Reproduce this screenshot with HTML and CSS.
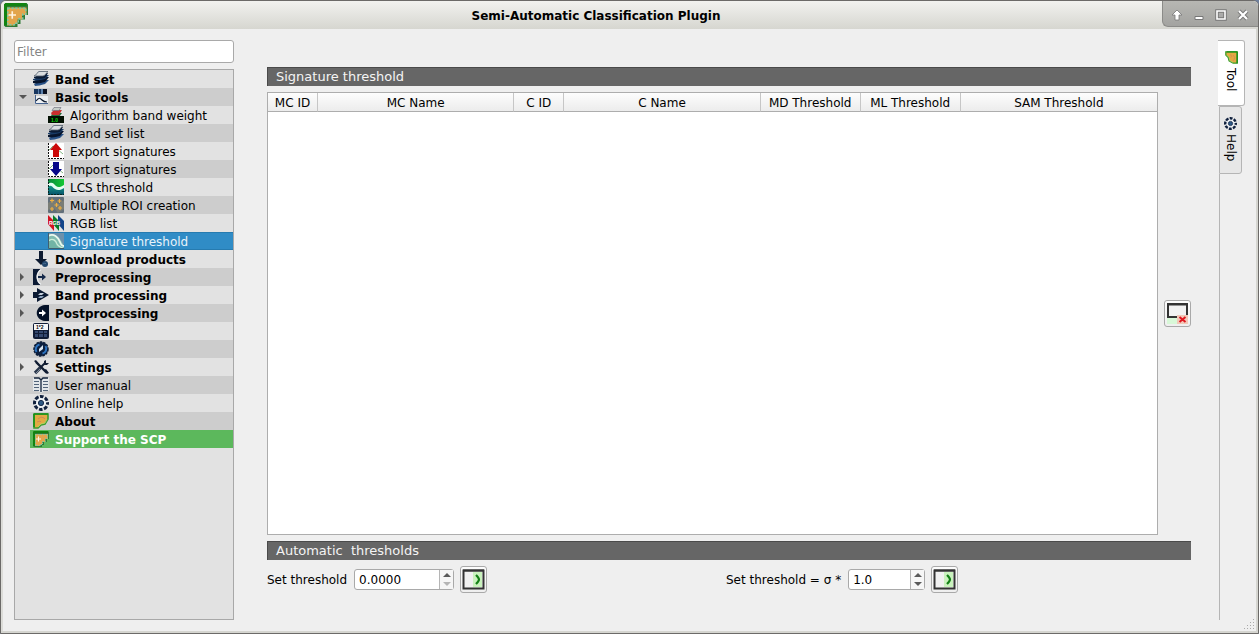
FILE: index.html
```html
<!DOCTYPE html>
<html lang="en">
<head>
<meta charset="utf-8">
<title>Semi-Automatic Classification Plugin</title>
<link rel="stylesheet" href="styles.css">
</head>
<body>
<svg class="defs" aria-hidden="true">
  <defs>
    <linearGradient id="g-lcs" x1="0" y1="0" x2="1" y2="0"><stop offset="0" stop-color="#0a8a3c"/><stop offset="1" stop-color="#12c832"/></linearGradient>
    <linearGradient id="g-sea" x1="0" y1="0" x2="0" y2="1"><stop offset="0" stop-color="#17a58c"/><stop offset="1" stop-color="#07506a"/></linearGradient>
  </defs>
  <symbol id="i-scp" viewBox="0 0 16 16">
    <path d="M1 0h14l1 1v7h-2v3h-3v3H9v2H1l-1-1V1z" fill="#2f7a35"/>
    <path d="M1 0h14v2H2v13H0V1z" fill="#128312"/>
    <path d="M2 3h13v5h-3v3H9v3H7v1H2z" fill="#e2a54c"/>
    <path d="M2.500 3.500h12v4h-2v3h-3v3h-2v1h-5z" fill="none" stroke="#7cc9a4" stroke-dasharray="1.500 1"/>
    <path d="M5.500 5.500v5M3 8h5" stroke="#fff3df" stroke-width="1.100"/>
  </symbol>
  <symbol id="i-about" viewBox="0 0 16 16">
    <path d="M1 1h14v5l-3 5-4 1-3 3H1z" fill="#e3aa42" stroke="#3c9d2c" stroke-width="1.600"/>
    <path d="M1 1h14M1 1v13" stroke="#189018" stroke-width="1.600"/>
    <path d="M5 6l3-2 3 1 1 1M4 9l3-1 1 1" stroke="#c9805c" fill="none" stroke-width=".8"/>
    <path d="M5 14l3-3 4-1 2-4" stroke="#b6d86c" fill="none" stroke-width=".8"/>
  </symbol>
  <symbol id="i-bands" viewBox="0 0 16 16">
    <path d="M1 13c3-1 4-3 6-4h9l-4 4c-4 1-7 2-10 2z" fill="#2a5388"/>
    <path d="M0 10c3 0 4-3 6-4h10l-4 5c-4 1-8 2-12 1z" fill="#07152d"/>
    <path d="M0 8c3 0 4-3 6-4h10l-4 4c-4 1-8 2-12 1z" fill="#183b66"/>
    <path d="M1 6c3 0 3-3 5-4h9l-3 5c-4 1-8 1-11 0z" fill="#0b1c36"/>
    <path d="M1 5c3-1 3-4 5-4.500h9c-2 1-2 4-5 4.500z" fill="#d9dde0" stroke="#53606f" stroke-width=".8"/>
  </symbol>
  <symbol id="i-basic" viewBox="0 0 16 16">
    <path fill="#17365f" d="M1 0h5v5H1zM6 0h2v5H6z"/><path fill="#0a1222" d="M10 0h4v5h-4z"/><path fill="#5b81ad" d="M5 0h1v5H5zM8 0h2v5H8z"/>
    <path d="M2 7h13v8H2z" fill="#edf0f3"/>
    <path d="M2.500 6v8.500H15" fill="none" stroke="#456390"/><path d="M3 12c3-4 4-3 6-1s3 2 5 2" fill="none" stroke="#101d32" stroke-width="1.200"/>
  </symbol>
  <symbol id="i-export" viewBox="0 0 16 16">
    <path d="M0 0h16v16H0z" fill="#fff"/><path d="M1 7l4-4 4 3 6 5" fill="none" stroke="#84b884"/>
    <path d="M.500 0v15.500H16" fill="none" stroke="#111" stroke-dasharray="2 1"/>
    <path d="M8 0l6 7h-3v7H5V7H2z" fill="#cc0909"/>
  </symbol>
  <symbol id="i-import" viewBox="0 0 16 16">
    <path d="M0 0h16v16H0z" fill="#fff"/><path d="M1 8l4-4 4 3 6 5" fill="none" stroke="#84b884"/>
    <path d="M.500 0v15.500H16" fill="none" stroke="#111" stroke-dasharray="2 1"/>
    <path d="M8 15l6-7h-3V1H5v7H2z" fill="#07078a"/>
  </symbol>
  <symbol id="i-lcs" viewBox="0 0 16 16">
    <path d="M0 0h16v16H0z" fill="url(#g-lcs)"/>
    <path d="M0 6c4-3 5 2 8 3s5 0 8-1v8H0z" fill="url(#g-sea)"/>
    <path d="M0 5c4-3 6 0 8 2s5 1 8-1v3c-3 2-6 3-9 1S3 5 0 8z" fill="#e4fff0"/>
    <path d="M0 15.500h16M.500 0v15" stroke="#06251f" stroke-dasharray="2 1"/>
  </symbol>
  <symbol id="i-roi" viewBox="0 0 16 16">
    <rect width="16" height="16" rx="1" fill="#626f7a"/><path d="M0 6l6-4 5 5 5-4v9l-6 4-4-5-6 2z" fill="#7a7d75"/>
    <path d="M4 1.500v4M2 3.500h4M11.500 2v4M9.500 4h4M8.500 6v4M6.500 8h4M4 10v4M2 12h4M12 9v4M10 11h4" stroke="#f0b040" stroke-width="1.200"/>
  </symbol>
  <symbol id="i-sig" viewBox="0 0 16 16">
    <path d="M0 0h16v16H0z" fill="#6c90ab"/><path d="M0 2c8-3 12 3 16 11v3H0z" fill="#82bdb0"/>
    <path d="M0 3c6-3 10 1 12 6 1 3 2 4 4 4" fill="none" stroke="#eaf8ef" stroke-width="1.800"/>
    <path d="M0 9c4-4 7-1 8 3 1 2 4 2 8 3v1H0z" fill="#71b4a5"/><path d="M0 8c5-4 8 0 9 3 1 2 3 3 6 4" fill="none" stroke="#cdeed9" stroke-width="1.200"/>
    <path d="M.500 0v15.500H16" fill="none" stroke="#405e70"/>
  </symbol>
  <symbol id="i-download" viewBox="0 0 16 16">
    <path d="M6 0h4v8h4l-6 6-6-6h4z" fill="#0d1b31"/><circle cx="12" cy="13" r="3" fill="#21466c"/><path d="M10 13l2-1 1 1" stroke="#5b7ca0" fill="none" stroke-width=".7"/>
  </symbol>
  <symbol id="i-pre" viewBox="0 0 16 16">
    <path d="M0 0h8C2 4 2 12 8 16H0z" fill="#0b1a34"/><path d="M8 .500C3 4 3 12 8 15.500" fill="none" stroke="#eef0f2" stroke-width="1.300"/>
    <path d="M5 8h5" stroke="#15294a" stroke-width="2"/><path d="M9 4.500l4 3.500-4 3.500z" fill="#15294a"/>
  </symbol>
  <symbol id="i-proc" viewBox="0 0 16 16">
    <path d="M0 5h4V1l12 7-12 7v-4H0z" fill="#0b1a33"/><path d="M5 8l2-2h4l-2 2z" fill="#c5cfdb"/><path d="M5 11l2-2h4l-2 2z" fill="#8fa5bf"/>
  </symbol>
  <symbol id="i-post" viewBox="0 0 16 16">
    <path d="M16 0h-4C1 1 1 15 12 16h4z" fill="#041127"/><path d="M6 8h4" stroke="#fff" stroke-width="2"/><path d="M9 4.500l4 3.500-4 3.500z" fill="#fff"/>
  </symbol>
  <symbol id="i-batch" viewBox="0 0 16 16">
    <circle cx="8" cy="8" r="7" fill="#0b1f3f"/><circle cx="8" cy="8" r="7" fill="none" stroke="#0b1c38" stroke-width="1.500" stroke-dasharray="2.500 1"/>
    <path d="M3.500 11a5 5 0 0 1 3-7.500M12.500 5a5 5 0 0 1-3 7.500" fill="none" stroke="#2d74c0" stroke-width="2"/>
    <path d="M6 11V8l4-4v4z" fill="#d9e6f2"/>
  </symbol>
  <symbol id="i-settings" viewBox="0 0 16 16">
    <path d="M3 3l11 11" stroke="#111d33" stroke-width="2.400"/><path d="M6 10l6-6" stroke="#111d33" stroke-width="2"/>
    <path d="M1 2l2-1 3 4-1 1zM11 5V2l2-1v3h3l-2 2h-3zM11 11l2-1 3 4-2 1z" fill="#111d33"/><path d="M2 14l5-5" stroke="#2a374c" stroke-width="3.400"/><path d="M3 14l4-4" stroke="#a6b0bc" stroke-width=".7"/>
  </symbol>
  <symbol id="i-manual" viewBox="0 0 16 16">
    <path d="M0 1h5l3 2 3-2h5v13h-5l-3 2-3-2H0z" fill="#e3e7ea"/>
    <path d="M8 3v12M8 3L6 1H1M8 3l2-2h5" stroke="#14243c" stroke-width="1.300" fill="none"/>
    <path d="M1 4.500h5M1 7.500h5M1 10.500h5M1 13.500h5M10 4.500h5M10 7.500h5M10 10.500h5M10 13.500h5" stroke="#52647a"/>
  </symbol>
  <symbol id="i-help" viewBox="0 0 16 16">
    <circle cx="8" cy="8" r="6.500" fill="#eef1f4" stroke="#10203d" stroke-width="3" stroke-dasharray="3.600 1.500" stroke-dashoffset="1.800"/>
    <circle cx="8" cy="8" r="2.600" fill="#2d5884" stroke="#152949"/>
  </symbol>
  <symbol id="i-run" viewBox="0 0 23 21">
    <path d="M1.500 1.500h20v18h-20z" fill="#f1f1f1" stroke="#333" stroke-width="2"/><path d="M1 1.500h21" stroke="#333" stroke-width="2"/>
    <path d="M11 3h9v15h-9z" fill="#c9f2bd"/><path d="M14 6c4 4 4 5 0 9" fill="none" stroke="#138016" stroke-width="2.200"/>
  </symbol>
  <symbol id="i-reset" viewBox="0 0 23 23">
    <path d="M1 15h12v7H1z" fill="#d8f8d8"/><path d="M2 2.500h19v12.500H2z" fill="#f2f2f2" stroke="#333" stroke-width="2"/><path d="M1 2h21" stroke="#333" stroke-width="2"/>
    <path d="M11 13h11v9H11z" fill="#f2c8b8"/><path d="M13.500 15l6 5M19.500 15l-6 5" stroke="#e01820" stroke-width="2"/>
  </symbol>
</svg>

<div class="window">
  <header class="titlebar">
    <svg class="app-icon"><use href="#i-scp"/></svg>
    <h1 class="title">Semi-Automatic Classification Plugin</h1>
    <div class="window-buttons">
      <button class="window-button" aria-label="Shade"><svg viewBox="0 0 12 12"><path d="M6 1l5 5H8v5H4V6H1z" fill="#fff" stroke="#777" stroke-width=".8"/></svg></button>
      <button class="window-button" aria-label="Minimize"><svg viewBox="0 0 12 12"><path d="M2 7.500h8v3H2z" fill="#fff" stroke="#777"/></svg></button>
      <button class="window-button" aria-label="Maximize"><svg viewBox="0 0 12 12"><path d="M2 2h8v8H2z" fill="none" stroke="#777" stroke-width="3.500"/><path d="M2 2h8v8H2z" fill="none" stroke="#fff" stroke-width="1.600"/><path d="M4 5h4v2H4z" fill="#aaa"/></svg></button>
      <button class="window-button" aria-label="Close"><svg viewBox="0 0 12 12"><path d="M2 2l8 8M10 2l-8 8" stroke="#777" stroke-width="4"/><path d="M2 2l8 8M10 2l-8 8" stroke="#fff" stroke-width="2.200"/></svg></button>
    </div>
  </header>

  <div class="content">
    <aside class="sidebar">
      <input class="filter" type="text" placeholder="Filter" aria-label="Filter">
      <nav class="tree">
        <button class="row bold"><span class="arrow"></span><svg><use href="#i-bands"/></svg>Band set</button>
        <button class="row bold" aria-expanded="true"><span class="arrow open"></span><svg><use href="#i-basic"/></svg>Basic tools</button>
        <button class="row child"><svg viewBox="0 0 16 16" aria-hidden="true">
          <path d="M3 8l3-2h8l-3 4H4z" fill="#246c3b"/>
          <path d="M3 6l3-3h8l-3 5H4z" fill="#c92f2f"/>
          <path d="M4 3.500l2-3h7l-2 3z" fill="#c7cfca" stroke="#667" stroke-width=".6"/>
          <path d="M0 9h16v7H0z" fill="#031003"/>
          <text x="3" y="15" class="mini green">1.0</text>
        </svg>Algorithm band weight</button>
        <button class="row child"><svg><use href="#i-bands"/></svg>Band set list</button>
        <button class="row child"><svg><use href="#i-export"/></svg>Export signatures</button>
        <button class="row child"><svg><use href="#i-import"/></svg>Import signatures</button>
        <button class="row child"><svg><use href="#i-lcs"/></svg>LCS threshold</button>
        <button class="row child"><svg><use href="#i-roi"/></svg>Multiple ROI creation</button>
        <button class="row child"><svg viewBox="0 0 16 16" aria-hidden="true">
          <path d="M0 0l6 6v10l-6-7z" fill="#d31420"/>
          <path d="M5 0l6 6v10l-6-7z" fill="#087d28"/><path d="M10 0l6 6v10l-6-7z" fill="#114489"/>
          <text x="1" y="10" class="mini white">RGB</text>
        </svg>RGB list</button>
        <button class="row child selected" aria-current="page"><svg><use href="#i-sig"/></svg>Signature threshold</button>
        <button class="row bold"><span class="arrow"></span><svg><use href="#i-download"/></svg>Download products</button>
        <button class="row bold" aria-expanded="false"><span class="arrow closed"></span><svg><use href="#i-pre"/></svg>Preprocessing</button>
        <button class="row bold" aria-expanded="false"><span class="arrow closed"></span><svg><use href="#i-proc"/></svg>Band processing</button>
        <button class="row bold" aria-expanded="false"><span class="arrow closed"></span><svg><use href="#i-post"/></svg>Postprocessing</button>
        <button class="row bold"><span class="arrow"></span><svg viewBox="0 0 16 16" aria-hidden="true">
          <rect width="16" height="16" rx="2" fill="#101c36"/><path d="M1 1h14v6H1z" fill="#f4f5f7"/>
          <text x="3" y="6" class="mini">1*2</text>
          <path d="M2 8h3v2H2zM6 8h4v2H6zM11 8h3v2h-3zM2 11h3v3H2zM6 11h4v3H6zM11 11h3v3h-3z" fill="#34486f"/>
        </svg>Band calc</button>
        <button class="row bold"><span class="arrow"></span><svg><use href="#i-batch"/></svg>Batch</button>
        <button class="row bold" aria-expanded="false"><span class="arrow closed"></span><svg><use href="#i-settings"/></svg>Settings</button>
        <button class="row"><span class="arrow"></span><svg><use href="#i-manual"/></svg>User manual</button>
        <button class="row"><span class="arrow"></span><svg><use href="#i-help"/></svg>Online help</button>
        <button class="row bold"><span class="arrow"></span><svg><use href="#i-about"/></svg>About</button>
        <button class="row bold support"><svg><use href="#i-scp"/></svg>Support the SCP</button>
      </nav>
    </aside>

    <main class="main">
      <h2 class="section-title">Signature threshold</h2>
      <div class="table-area">
        <div class="table-frame">
          <table class="thresholds">
            <colgroup><col class="id"><col class="name"><col class="id"><col class="name"><col class="value"><col class="value"><col class="name"></colgroup>
            <thead><tr><th>MC ID</th><th>MC Name</th><th>C ID</th><th>C Name</th><th>MD Threshold</th><th>ML Threshold</th><th>SAM Threshold</th></tr></thead>
            <tbody></tbody>
          </table>
        </div>
        <button class="tool-button" aria-label="Reset thresholds"><svg class="reset-icon"><use href="#i-reset"/></svg></button>
      </div>
      <h2 class="section-title spaced">Automatic  thresholds</h2>
      <div class="controls">
        <div class="control">
          <label for="threshold">Set threshold</label>
          <span class="spin"><input class="spin-input" id="threshold" type="number" min="0" step="0.0001" value="0.0000"><span class="steps"><button class="step" aria-label="Increase threshold"><i class="up"></i></button><button class="step" aria-label="Decrease threshold" disabled><i class="down"></i></button></span></span>
          <button class="tool-button" aria-label="Apply threshold"><svg class="run-icon"><use href="#i-run"/></svg></button>
        </div>
        <div class="control">
          <label for="sigma">Set threshold = σ *</label>
          <span class="spin narrow"><input class="spin-input" id="sigma" type="number" min="0" step="0.1" value="1.0"><span class="steps"><button class="step" aria-label="Increase factor"><i class="up"></i></button><button class="step" aria-label="Decrease factor"><i class="down"></i></button></span></span>
          <button class="tool-button" aria-label="Apply factor"><svg class="run-icon"><use href="#i-run"/></svg></button>
        </div>
      </div>
    </main>

    <div class="tabs" role="tablist" aria-orientation="vertical">
      <button class="tab active" role="tab" aria-selected="true"><svg><use href="#i-about"/></svg>Tool</button>
      <button class="tab" role="tab" aria-selected="false"><svg><use href="#i-help"/></svg>Help</button>
      <span class="tab-line"></span>
    </div>
  </div>
  <svg class="grip" viewBox="0 0 12 12"><path d="M10 1.500h1M7 4.500h1M10 4.500h1M4 7.500h1M7 7.500h1M10 7.500h1M1 10.500h1M4 10.500h1M7 10.500h1M10 10.500h1" stroke="#aaa"/></svg>
</div>
</body>
</html>
```

FILE: styles.css
```css
* { box-sizing: border-box; }

body {
  margin: 0;
  background: #6e7f9c;
  color: #000;
  font: 12px/18px "DejaVu Sans", sans-serif;
}

button, input { font: inherit; color: inherit; }
button { margin: 0; padding: 0; border: 0; background: none; }
.defs { position: absolute; width: 0; height: 0; }
.mini { font: bold 5px "Liberation Sans", sans-serif; }
.green { fill: #0ad60a; }
.white { fill: #fff; }

.window {
  position: relative;
  display: flex;
  flex-direction: column;
  height: 100vh;
  border: 1px solid #6c6a68;
  border-radius: 6px 6px 0 0;
  background: #efefef;
  box-shadow: inset -2px -2px #d5d5d0, inset 2px 0 #dcdcd8;
  overflow: hidden;
}

/* Title bar */
.titlebar {
  display: flex;
  flex: none;
  height: 28px;
  padding-left: 3px;
  background: linear-gradient(#f2f2ef, #d6d6d0);
}
.app-icon { width: 24px; height: 24px; margin-top: 2px; }
.title {
  flex: 1;
  margin: 0;
  padding-left: 2px;
  font-size: 12px;
  line-height: 30px;
  text-align: center;
}
.window-buttons {
  display: flex;
  align-items: center;
  justify-content: space-around;
  width: 96px;
  height: 26px;
  padding: 2px 4px 0 3px;
  border: 1px solid #8b8b88;
  border-width: 0 0 1px 1px;
  border-radius: 0 0 0 6px;
  background: linear-gradient(#b7b7b3, #a3a3a0);
}
.window-button { display: flex; }
.window-button svg { width: 12px; height: 12px; }

/* Page areas */
.content {
  display: flex;
  flex: 1;
  min-height: 0;
  padding: 11px 13px 13px;
}
.sidebar {
  display: flex;
  flex: none;
  flex-direction: column;
  gap: 6px;
  width: 220px;
}
.filter {
  height: 23px;
  padding: 0 2px;
  border: 1px solid #a9a9a9;
  border-radius: 3px;
  background: #fff;
}
.filter::placeholder { color: #858585; }

/* Tool tree */
.tree {
  display: flex;
  flex: 1;
  flex-direction: column;
  border: 1px solid #a8a8a8;
  background: #e2e2e2;
}
.row {
  display: flex;
  align-items: flex-start;
  height: 18px;
  line-height: 20px;
  text-align: left;
  white-space: pre;
}
.row:nth-child(even) { background: #cdcdcd; }
.row svg { flex: none; width: 16px; height: 16px; margin: 1px 6px 0 3px; }
.bold { font-weight: bold; }
.child { padding-left: 30px; }
.row.selected {
  background: #308cc6;
  color: #e9f3fa;
  box-shadow: inset 0 1px #267bb0, inset 0 -1px #267bb0;
}
.row.support { margin-left: 15px; background: #5cb85c; color: #fff; }
.arrow { display: flex; flex: none; align-self: center; width: 15px; padding-left: 4px; }
.open::before {
  content: "";
  border: 4px solid transparent;
  border-top-color: #555;
  border-bottom: 0;
}
.closed::before {
  content: "";
  margin-left: 1px;
  border: 4px solid transparent;
  border-left-color: #555;
  border-right: 0;
}

/* Main panel */
.main {
  display: flex;
  flex: 1;
  flex-direction: column;
  gap: 6px;
  min-width: 0;
  padding: 27px 27px 27px 33px;
}
.section-title {
  flex: none;
  height: 19px;
  margin: 0;
  padding-left: 8px;
  border: 1px solid #4a4a4a;
  border-width: 1px 0 0 1px;
  background: #666;
  color: #f4f4f4;
  font-size: 13px;
  font-weight: normal;
  line-height: 18px;
}
.spaced { white-space: pre; }
.table-area {
  display: flex;
  flex: 1;
  align-items: center;
  gap: 6px;
  min-height: 0;
}
.table-frame {
  flex: 1;
  align-self: stretch;
  border: 1px solid #adadad;
  background: #fff;
}
.thresholds {
  width: 100%;
  border-collapse: separate;
  border-spacing: 0;
  table-layout: fixed;
}
.thresholds th {
  height: 19px;
  padding: 2px 0 0;
  border-right: 1px solid #c6c6c6;
  border-bottom: 1px solid #adadad;
  background: linear-gradient(#fdfdfd, #ececec);
  font-weight: normal;
  line-height: 16px;
}
.thresholds th:last-child { border-right: 0; }
.id { width: 50px; }
.value { width: 100px; }

.tool-button {
  display: flex;
  flex: none;
  align-items: center;
  justify-content: center;
  width: 27px;
  height: 27px;
  border: 1px solid #a9a9a9;
  border-radius: 3px;
  background: linear-gradient(#fdfdfd, #efefef);
}
.reset-icon { width: 23px; height: 23px; }
.run-icon { width: 23px; height: 21px; }

.controls { display: grid; grid-template-columns: 459px 1fr; }
.control { display: flex; align-items: center; gap: 6px; }
.control label { padding-right: 1px; }
.spin {
  display: flex;
  width: 100px;
  height: 21px;
  border: 1px solid #a9a9a9;
  border-radius: 3px;
  background: #fff;
}
.spin.narrow { width: 77px; }
.spin-input {
  flex: 1;
  min-width: 0;
  padding: 0 4px;
  border: 0;
  background: none;
  appearance: textfield;
}
.spin-input::-webkit-inner-spin-button { appearance: none; margin: 0; }
.steps {
  display: flex;
  flex-direction: column;
  width: 14px;
  border-left: 1px solid #b5b5b5;
  background: #f6f6f6;
}
.step { display: flex; flex: 1; align-items: center; justify-content: center; }
.up, .down { border: 4px solid transparent; }
.up { border-top: 0; border-bottom-color: #5a5a5a; }
.down { border-bottom: 0; border-top-color: #5a5a5a; }
.step:disabled .down { border-top-color: #b5b5b5; }

/* Side tabs */
.tabs {
  display: flex;
  flex: none;
  flex-direction: column;
  width: 27px;
}
.tab {
  display: flex;
  align-items: center;
  gap: 4px;
  width: 23px;
  height: 68px;
  margin-left: 1px;
  padding-top: 10px;
  border: 1px solid #b5b5b5;
  border-radius: 0 3px 3px 0;
  background: #e7e7e7;
  writing-mode: vertical-rl;
}
.tab.active {
  width: 27px;
  height: 66px;
  margin-left: 0;
  border-left: 0;
  background: #fff;
}
.tab svg { width: 13px; height: 13px; }
.tab.active svg { transform: rotate(90deg); }
.tab-line { flex: 1; margin-left: 1px; border-left: 1px solid #b5b5b5; }

.grip { position: absolute; right: 3px; bottom: 3px; width: 12px; height: 12px; }
```
